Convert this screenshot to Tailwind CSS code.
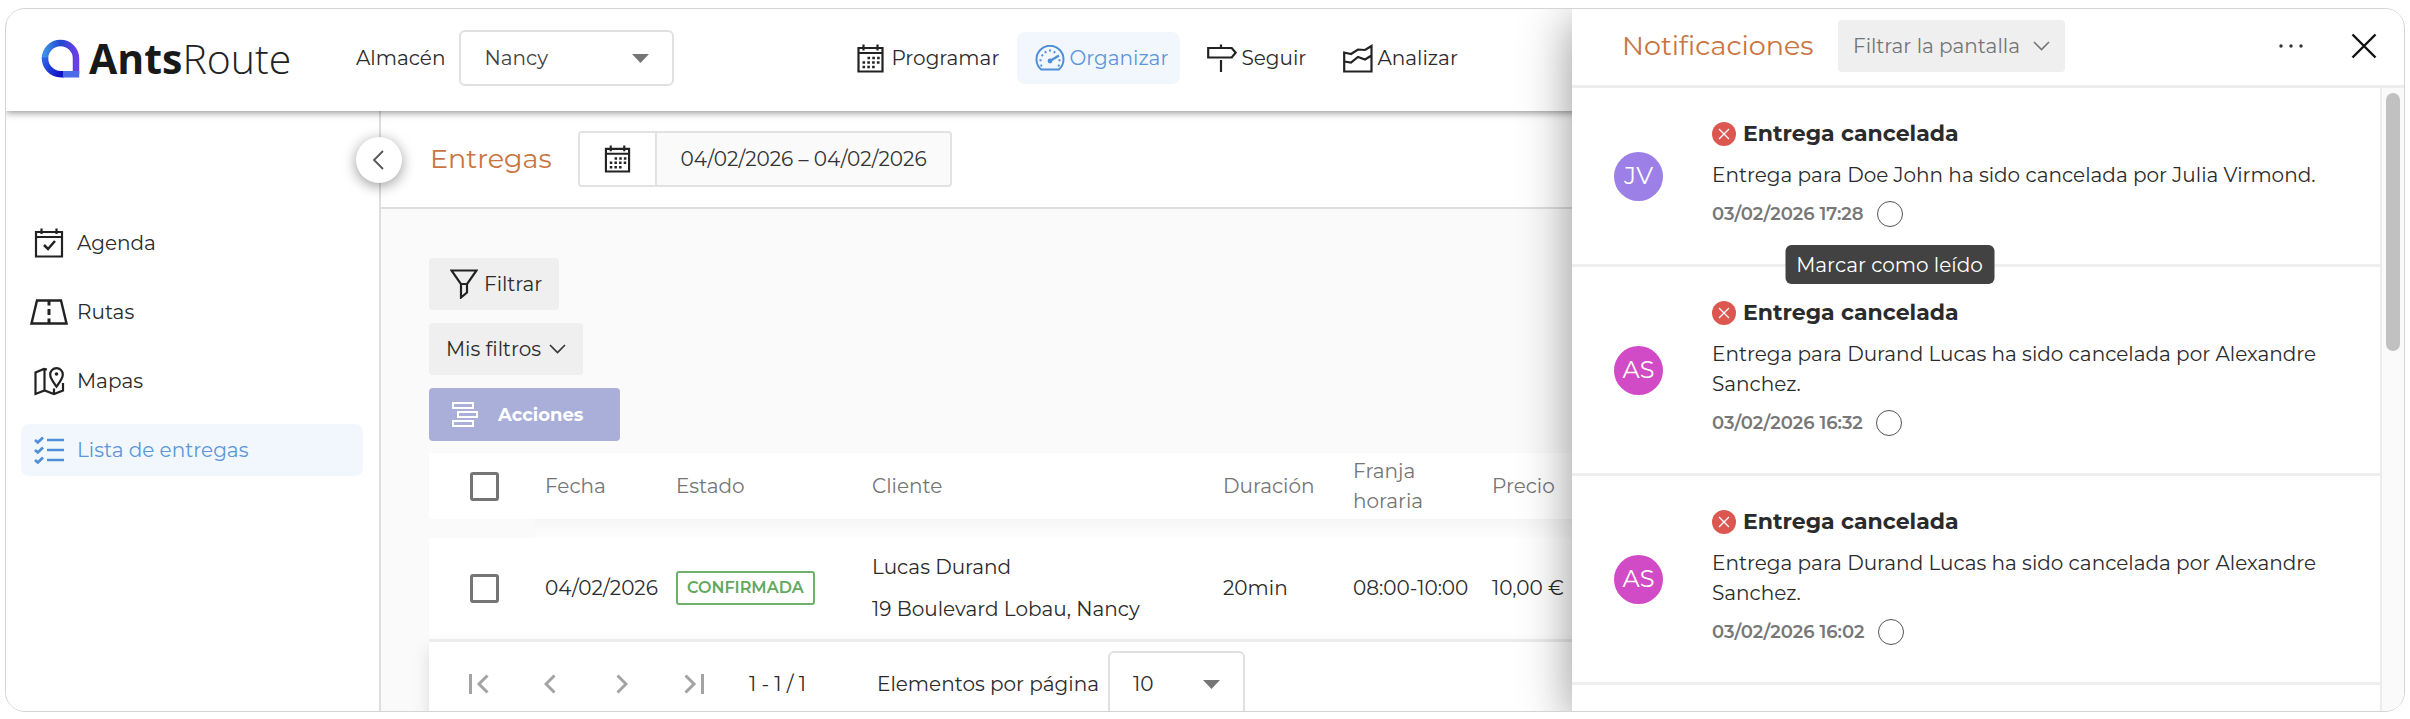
<!doctype html>
<html lang="es" class="h-full">
  <head>
    <meta charset="UTF-8" />
    <meta name="viewport" content="width=device-width, initial-scale=1.0" />
    <title>AntsRoute - Lista de entregas</title>
    <script src="https://cdn.jsdelivr.net/npm/@tailwindcss/browser@4"></script>
  </head>
  <body class="h-full bg-white px-[5px] pt-2 pb-[7px] font-['Montserrat','Inter',sans-serif] text-[20px] leading-[30px] text-[#2b2b2b]">
    <div class="relative flex h-full flex-col overflow-hidden rounded-[20px] border border-[#d4d4d4] bg-white">

      <header class="relative z-10 flex h-[102px] shrink-0 items-center bg-white pb-[4px] pl-[35px] shadow-[0_1px_8px_rgba(0,0,0,0.5)]">
        <a href="#" class="flex w-[315px] items-center gap-[8px]" aria-label="AntsRoute">
          <svg class="h-[39px] w-[40px]" viewBox="0 0 40 39" fill="none">
            <defs>
              <linearGradient id="logo-a" x1="0" y1="0" x2="1" y2="0">
                <stop offset="0" stop-color="#3a8ee6" />
                <stop offset="0.5" stop-color="#2348cf" />
                <stop offset="1" stop-color="#6a3fe6" />
              </linearGradient>
              <linearGradient id="logo-b" x1="0" y1="0" x2="1" y2="0.6">
                <stop offset="0" stop-color="#2f62e0" />
                <stop offset="1" stop-color="#0f14c8" />
              </linearGradient>
            </defs>
            <path d="M4 19.5A15.5 15.5 0 0 1 35 19.500V35" stroke="url(#logo-a)" stroke-width="6.500" />
            <path d="M4 18.500A16 16 0 0 0 20 35.200H23" stroke="url(#logo-b)" stroke-width="6.500" />
            <path d="M22 35.200H38.200" stroke="#4a6cea" stroke-width="6.500" />
          </svg>
          <span class="font-['Open_Sans','Noto_Sans',sans-serif] text-[41px] leading-[44px] font-light text-[#222]"><b class="font-bold text-[#191919]">Ants</b>Route</span>
        </a>

        <label for="warehouse" class="mr-[14px]">Almacén</label>
        <div class="relative">
          <select id="warehouse" class="h-[56px] w-[215px] appearance-none rounded-md border-2 border-[#e0e0e0] bg-white pl-[23px] text-[#444]">
            <option>Nancy</option>
          </select>
          <svg class="pointer-events-none absolute top-6 right-[25px] h-[9px] w-[17px]" viewBox="0 0 17 9" fill="#757575"><path d="M0 0h17L8.500 9z" /></svg>
        </div>

        <nav class="ml-[165px] flex gap-[9px]">
          <a href="#" class="flex h-[52px] w-[169px] items-center gap-[7px] rounded-lg pl-[18px]">
            <svg class="h-[29px] w-[27px] shrink-0" viewBox="0 0 27 29" fill="none" stroke="#222" stroke-width="2.200">
              <path d="M1.500 4h24v23.500h-24zM1.500 9h24M6.500 0.500v6M20.500 0.500v6" />
              <path d="M10.500 14h13M5.500 18.500h17M5.500 23h13" stroke-width="2.600" stroke-dasharray="2.600 2.200" />
            </svg>
            Programar
          </a>
          <a href="#" class="flex h-[52px] w-[163px] items-center gap-[4px] rounded-lg bg-[#f2f7fe] pl-[18px] text-[#5b96d8]">
            <svg class="h-[26px] w-[30px] shrink-0" viewBox="0 0 30 26" fill="none" stroke="#4f8fd8" stroke-width="2">
              <path d="M6.200 24.500A13.500 13.500 0 1 1 23.800 24.500Z" stroke-linejoin="round" />
              <path d="M5.500 21l1.500-.8M4.500 15.300h2M6.500 9.800l1.600 1M10 6.200l1 1.700M15 4.600v2M20 6.200l-1 1.700M25.500 15.300h-2M24.500 21l-1.500-.8" />
              <path d="M15 16l9-5.500" stroke-width="2.400" />
              <circle cx="15" cy="16" r="2.400" fill="#4f8fd8" stroke="none" />
            </svg>
            Organizar
          </a>
          <a href="#" class="flex h-[52px] w-[127px] items-center gap-[4px] rounded-lg pl-[18px]">
            <svg class="h-[28px] w-[30px] shrink-0" viewBox="0 0 30 28" fill="none" stroke="#222" stroke-width="2.200">
              <path d="M1.200 4h23.500l4 4.700-4 4.800H1.200zM14 0.500V4M14 16v12" />
            </svg>
            Seguir
          </a>
          <a href="#" class="flex h-[52px] w-[144px] items-center gap-[4px] rounded-lg pl-[18px]">
            <svg class="h-[30px] w-[30px] shrink-0" viewBox="0 0 30 30" fill="none" stroke="#222" stroke-width="2.200">
              <path d="M1.200 9.500V28.500H28.500V3l-6.500 4-7-0.500L8 11z M1.200 18.500L8 19.500l7-5.500 7 2.500 6.500-4" />
            </svg>
            Analizar
          </a>
        </nav>
      </header>

      <div class="flex min-h-0 flex-1">
        <aside class="relative w-[375px] shrink-0 border-r-2 border-[#dedede] bg-white pt-[106px] pr-[16px] pl-[15px]">
          <button type="button" aria-label="Contraer menú" class="absolute top-[26px] -right-[23px] z-10 flex size-[46px] items-center justify-center rounded-full bg-white pr-[3px] shadow-[0_3px_14px_rgba(0,0,0,0.4)]">
            <svg class="h-[20px] w-[12px]" viewBox="0 0 12 20" fill="none" stroke="#555" stroke-width="1.800"><path d="M11 1L2 10l9 9" /></svg>
          </button>
          <nav class="flex flex-col gap-[17px]">
            <a href="#" class="flex h-[52px] items-center gap-[9px] rounded-lg pl-[9px]">
              <svg class="h-[30px] w-[38px]" viewBox="0 0 38 30" fill="none" stroke="#222" stroke-width="2.200">
                <path d="M6 4h26v24.500H6zM6 9h26M11.500 0.500v5.500M26.500 0.500v5.500" />
                <path d="M14 17l4 4 7-8" stroke-width="2.500" />
              </svg>
              Agenda
            </a>
            <a href="#" class="flex h-[52px] items-center gap-[9px] rounded-lg pl-[9px]">
              <svg class="h-[26px] w-[38px]" viewBox="0 0 38 26" fill="none" stroke="#222" stroke-width="2.400">
                <path d="M7 1.500h24l5.500 23H1.500z" />
                <path d="M19 1.500v5M19 10v6M19 19.500v5" stroke-width="3" />
              </svg>
              Rutas
            </a>
            <a href="#" class="flex h-[52px] items-center gap-[9px] rounded-lg pl-[9px]">
              <svg class="h-[30px] w-[38px]" viewBox="0 0 38 30" fill="none" stroke="#222" stroke-width="2.200">
                <path d="M17 3.500L14 3 5.500 6.500V28l9-3.500 9.500 3.500 9-3.500V17M14.500 3v21.500M24 28v-5.500" />
                <path d="M26.500 20.500c-3.500-5-6.300-8-6.300-12a6.300 6.300 0 0 1 12.600 0c0 4-2.800 7-6.300 12z" />
                <circle cx="26.500" cy="8" r="1.800" fill="#222" stroke="none" />
              </svg>
              Mapas
            </a>
            <a href="#" class="flex h-[52px] items-center gap-[9px] rounded-lg bg-[#f2f7fe] pl-[9px] text-[#5b96d8]">
              <svg class="h-[28px] w-[38px]" viewBox="0 0 38 28" fill="none" stroke="#4f8fd8" stroke-width="2.500">
                <path d="M17 4h17M17 14h17M17 24h17" />
                <path d="M5 4l2.800 2.500L13 1.500M5 14l2.800 2.500 5.200-5M5 24l2.800 2.500 5.200-5" stroke-width="2.700" />
              </svg>
              Lista de entregas
            </a>
          </nav>
        </aside>

        <main class="flex min-w-0 flex-1 flex-col bg-[#fafafa]">
          <div class="flex h-[98px] shrink-0 items-center gap-[24px] border-b-2 border-[#dedede] bg-white pl-[49px]">
            <h1 class="w-[124px] text-[27px] whitespace-nowrap text-[#c97541]">Entregas</h1>
            <div class="flex h-[56px] overflow-hidden rounded-sm border-2 border-[#e2e2e2]">
              <button type="button" aria-label="Abrir calendario" class="flex w-[77px] items-center justify-center border-r-2 border-[#e2e2e2] bg-white">
                <svg class="h-[28px] w-[27px]" viewBox="0 0 27 29" fill="none" stroke="#222" stroke-width="2.200">
                  <path d="M1.500 4h24v23.500h-24zM1.500 9h24M6.500 0.500v6M20.500 0.500v6" />
                  <path d="M10.500 14h13M5.500 18.500h17M5.500 23h13" stroke-width="2.600" stroke-dasharray="2.600 2.200" />
                </svg>
              </button>
              <input type="text" aria-label="Fechas" value="04/02/2026 – 04/02/2026" class="w-[293px] bg-[#fafafa] text-center text-[#333]" />
            </div>
          </div>

          <div class="flex flex-col items-start pt-[49px] pl-[48px]">
            <button type="button" class="mb-[13px] flex h-[52px] items-center gap-[6px] rounded-sm bg-[#efefef] pr-[17px] pl-[21px]">
              <svg class="h-[30px] w-[28px]" viewBox="0 0 28 30" fill="none" stroke="#222" stroke-width="2.200">
                <path d="M1.500 1.500h25L17 15v8.500l-6 5V15zM11 15h6" />
              </svg>
              Filtrar
            </button>
            <button type="button" class="mb-[13px] flex h-[52px] items-center gap-[8px] rounded-sm bg-[#efefef] px-[17px]">
              Mis filtros
              <svg class="h-[10px] w-[17px]" viewBox="0 0 17 10" fill="none" stroke="#333" stroke-width="1.600"><path d="M1 1l7.500 7.500L16 1" /></svg>
            </button>
            <button type="button" class="mb-[12px] flex h-[53px] w-[191px] items-center gap-[20px] rounded-sm bg-[#a9afd9] pl-[23px] text-[18px] font-bold text-white">
              <svg class="h-[25px] w-[26px]" viewBox="0 0 26 25" fill="none" stroke="#fff" stroke-width="2">
                <path d="M1 1h20v5H1zM6 10h19v5H6zM1 19h20v5H1z" />
              </svg>
              Acciones
            </button>

            <div class="w-full">
              <table class="w-full table-fixed border-collapse text-left">
                <colgroup>
                  <col class="w-[106px]" />
                  <col class="w-[131px]" />
                  <col class="w-[196px]" />
                  <col class="w-[351px]" />
                  <col class="w-[130px]" />
                  <col class="w-[139px]" />
                  <col />
                </colgroup>
                <thead>
                  <tr class="h-[66px] bg-white text-[#757575]">
                    <th class="pl-[41px]"><input type="checkbox" aria-label="Seleccionar todo" class="block size-[29px] appearance-none rounded-[3px] border-3 border-[#757575] bg-white" /></th>
                    <th class="px-[10px] font-normal">Fecha</th>
                    <th class="px-[10px] font-normal">Estado</th>
                    <th class="px-[10px] font-normal">Cliente</th>
                    <th class="px-[10px] font-normal">Duración</th>
                    <th class="px-[10px] font-normal">Franja<br />horaria</th>
                    <th class="px-[10px] font-normal">Precio</th>
                  </tr>
                </thead>
                <tbody>
                  <tr class="h-[19px]" aria-hidden="true">
                    <td></td>
                    <td colspan="6" class="bg-linear-to-b from-[#f6f6f6] to-[#fdfdfd]"></td>
                  </tr>
                  <tr class="h-[102px] border-b-3 border-[#f0f0f0] bg-white">
                    <td class="pl-[41px]"><input type="checkbox" aria-label="Seleccionar entrega" class="block size-[29px] appearance-none rounded-[3px] border-3 border-[#757575] bg-white" /></td>
                    <td class="px-[10px]">04/02/2026</td>
                    <td class="px-[10px]"><span class="inline-block rounded-[3px] border-2 border-[#6fb06c] px-[9px] text-[16px] font-semibold text-[#62a95f]">CONFIRMADA</span></td>
                    <td class="px-[10px]">
                      <p class="mb-[12px]">Lucas Durand</p>
                      <p>19 Boulevard Lobau, Nancy</p>
                    </td>
                    <td class="px-[10px]">20min</td>
                    <td class="px-[10px]">08:00-10:00</td>
                    <td class="px-[10px]">10,00 €</td>
                  </tr>
                </tbody>
              </table>

              <div class="flex h-[84px] items-center bg-white pl-[38px] shadow-[0_6px_16px_rgba(0,0,0,0.12)]">
                <button type="button" aria-label="Primera página" class="flex w-[24px] justify-center">
                  <svg class="h-[20px] w-[20px]" viewBox="0 0 20 20" fill="none" stroke="#a3a3a3" stroke-width="3"><path d="M1.500 0v20M18.500 1.500L10 10l8.500 8.500" /></svg>
                </button>
                <button type="button" aria-label="Página anterior" class="ml-[47px] flex w-[24px] justify-center">
                  <svg class="h-[20px] w-[12px]" viewBox="0 0 12 20" fill="none" stroke="#a3a3a3" stroke-width="3"><path d="M10.500 1.500L2 10l8.500 8.500" /></svg>
                </button>
                <button type="button" aria-label="Página siguiente" class="ml-[48px] flex w-[24px] justify-center">
                  <svg class="h-[20px] w-[12px]" viewBox="0 0 12 20" fill="none" stroke="#a3a3a3" stroke-width="3"><path d="M1.500 1.500L10 10l-8.500 8.500" /></svg>
                </button>
                <button type="button" aria-label="Última página" class="ml-[48px] flex w-[24px] justify-center">
                  <svg class="h-[20px] w-[20px]" viewBox="0 0 20 20" fill="none" stroke="#a3a3a3" stroke-width="3"><path d="M18.500 0v20M1.500 1.500L10 10l-8.500 8.500" /></svg>
                </button>
                <span class="ml-[43px] w-[128px] whitespace-nowrap">1 - 1 / 1</span>
                <label for="page-size" class="w-[231px] whitespace-nowrap">Elementos por página</label>
                <div class="relative">
                  <select id="page-size" class="h-[66px] w-[137px] appearance-none rounded-md border-2 border-[#e0e0e0] bg-white pl-[23px]">
                    <option>10</option>
                  </select>
                  <svg class="pointer-events-none absolute top-[29px] right-[25px] h-[9px] w-[17px]" viewBox="0 0 17 9" fill="#757575"><path d="M0 0h17L8.500 9z" /></svg>
                </div>
              </div>
            </div>
          </div>
        </main>
      </div>

      <!-- notifications drawer, opens over the page -->
      <section class="absolute inset-y-0 right-0 z-20 flex w-[832px] flex-col bg-white shadow-[0_10px_48px_rgba(0,0,0,0.42)]">
        <div class="flex h-[79px] shrink-0 items-center border-b-3 border-[#ededed] pr-[27px] pb-[3px] pl-[50px]">
          <h2 class="w-[216px] text-[27px] whitespace-nowrap text-[#c97541]">Notificaciones</h2>
          <button type="button" class="flex h-[52px] w-[227px] items-center justify-between rounded-sm bg-[#efefef] px-[15px] text-[#757575]">
            Filtrar la pantalla
            <svg class="h-[10px] w-[17px]" viewBox="0 0 17 10" fill="none" stroke="#757575" stroke-width="1.600"><path d="M1 1l7.500 7.500L16 1" /></svg>
          </button>
          <button type="button" aria-label="Más opciones" class="mr-[48px] ml-auto">
            <svg class="h-[4px] w-[24px]" viewBox="0 0 24 4" fill="#333"><circle cx="2" cy="2" r="1.700" /><circle cx="12" cy="2" r="1.700" /><circle cx="22" cy="2" r="1.700" /></svg>
          </button>
          <button type="button" aria-label="Cerrar">
            <svg class="size-[26px]" viewBox="0 0 26 26" fill="none" stroke="#111" stroke-width="2.400"><path d="M1.500 1.500l23 23M24.500 1.500l-23 23" /></svg>
          </button>
        </div>

        <div class="flex min-h-0 flex-1">
          <ul class="min-w-0 flex-1 overflow-hidden">
            <li class="flex items-center gap-[49px] border-b-3 border-[#efefef] pr-[40px] pl-[42px]">
              <span class="flex size-[49px] shrink-0 items-center justify-center rounded-full bg-[#9c80e8] text-[24px] text-white">JV</span>
              <div class="pt-[31px] pb-[37px]">
                <h3 class="flex items-center gap-[7px] text-[22px] font-bold">
                  <svg class="size-[24px]" viewBox="0 0 24 24" fill="none"><circle cx="12" cy="12" r="12" fill="#dc5750" /><path d="M7 7l10 10M17 7L7 17" stroke="#fff" stroke-width="1.300" /></svg>
                  Entrega cancelada
                </h3>
                <p class="mt-[11px]">Entrega para Doe John ha sido cancelada por Julia Virmond.</p>
                <div class="mt-[11px] flex h-[26px] items-center gap-[13px] text-[18px] font-semibold text-[#777]">
                  03/02/2026 17:28
                  <span class="relative flex">
                    <input type="radio" aria-describedby="read-tip" aria-label="Marcar como leído" class="size-[26px] appearance-none rounded-full border-[1px] border-[#555]" />
                    <span id="read-tip" role="tooltip" class="absolute top-[44px] left-1/2 z-10 flex h-[39px] w-[209px] -translate-x-1/2 items-center justify-center rounded-md bg-[#424242] text-[20px] font-normal whitespace-nowrap text-white">Marcar como leído</span>
                  </span>
                </div>
              </div>
            </li>
            <li class="flex items-center gap-[49px] border-b-3 border-[#efefef] pr-[40px] pl-[42px]">
              <span class="flex size-[49px] shrink-0 items-center justify-center rounded-full bg-[#d24bc6] text-[24px] text-white">AS</span>
              <div class="pt-[31px] pb-[37px]">
                <h3 class="flex items-center gap-[7px] text-[22px] font-bold">
                  <svg class="size-[24px]" viewBox="0 0 24 24" fill="none"><circle cx="12" cy="12" r="12" fill="#dc5750" /><path d="M7 7l10 10M17 7L7 17" stroke="#fff" stroke-width="1.300" /></svg>
                  Entrega cancelada
                </h3>
                <p class="mt-[11px]">Entrega para Durand Lucas ha sido cancelada por Alexandre Sanchez.</p>
                <div class="mt-[11px] flex h-[26px] items-center gap-[13px] text-[18px] font-semibold text-[#777]">
                  03/02/2026 16:32
                  <input type="radio" aria-label="Marcar como leído" class="size-[26px] appearance-none rounded-full border-[1px] border-[#555]" />
                </div>
              </div>
            </li>
            <li class="flex items-center gap-[49px] border-b-3 border-[#efefef] pr-[40px] pl-[42px]">
              <span class="flex size-[49px] shrink-0 items-center justify-center rounded-full bg-[#d24bc6] text-[24px] text-white">AS</span>
              <div class="pt-[31px] pb-[37px]">
                <h3 class="flex items-center gap-[7px] text-[22px] font-bold">
                  <svg class="size-[24px]" viewBox="0 0 24 24" fill="none"><circle cx="12" cy="12" r="12" fill="#dc5750" /><path d="M7 7l10 10M17 7L7 17" stroke="#fff" stroke-width="1.300" /></svg>
                  Entrega cancelada
                </h3>
                <p class="mt-[11px]">Entrega para Durand Lucas ha sido cancelada por Alexandre Sanchez.</p>
                <div class="mt-[11px] flex h-[26px] items-center gap-[13px] text-[18px] font-semibold text-[#777]">
                  03/02/2026 16:02
                  <input type="radio" aria-label="Marcar como leído" class="size-[26px] appearance-none rounded-full border-[1px] border-[#555]" />
                </div>
              </div>
            </li>
          </ul>
          <div class="w-[24px] shrink-0 border-l-2 border-[#ececec] bg-[#fafafa] px-[4px] pt-[5px]" aria-hidden="true">
            <div class="h-[258px] w-[14px] rounded-full bg-[#c1c1c1]"></div>
          </div>
        </div>
      </section>
    </div>
  </body>
</html>
